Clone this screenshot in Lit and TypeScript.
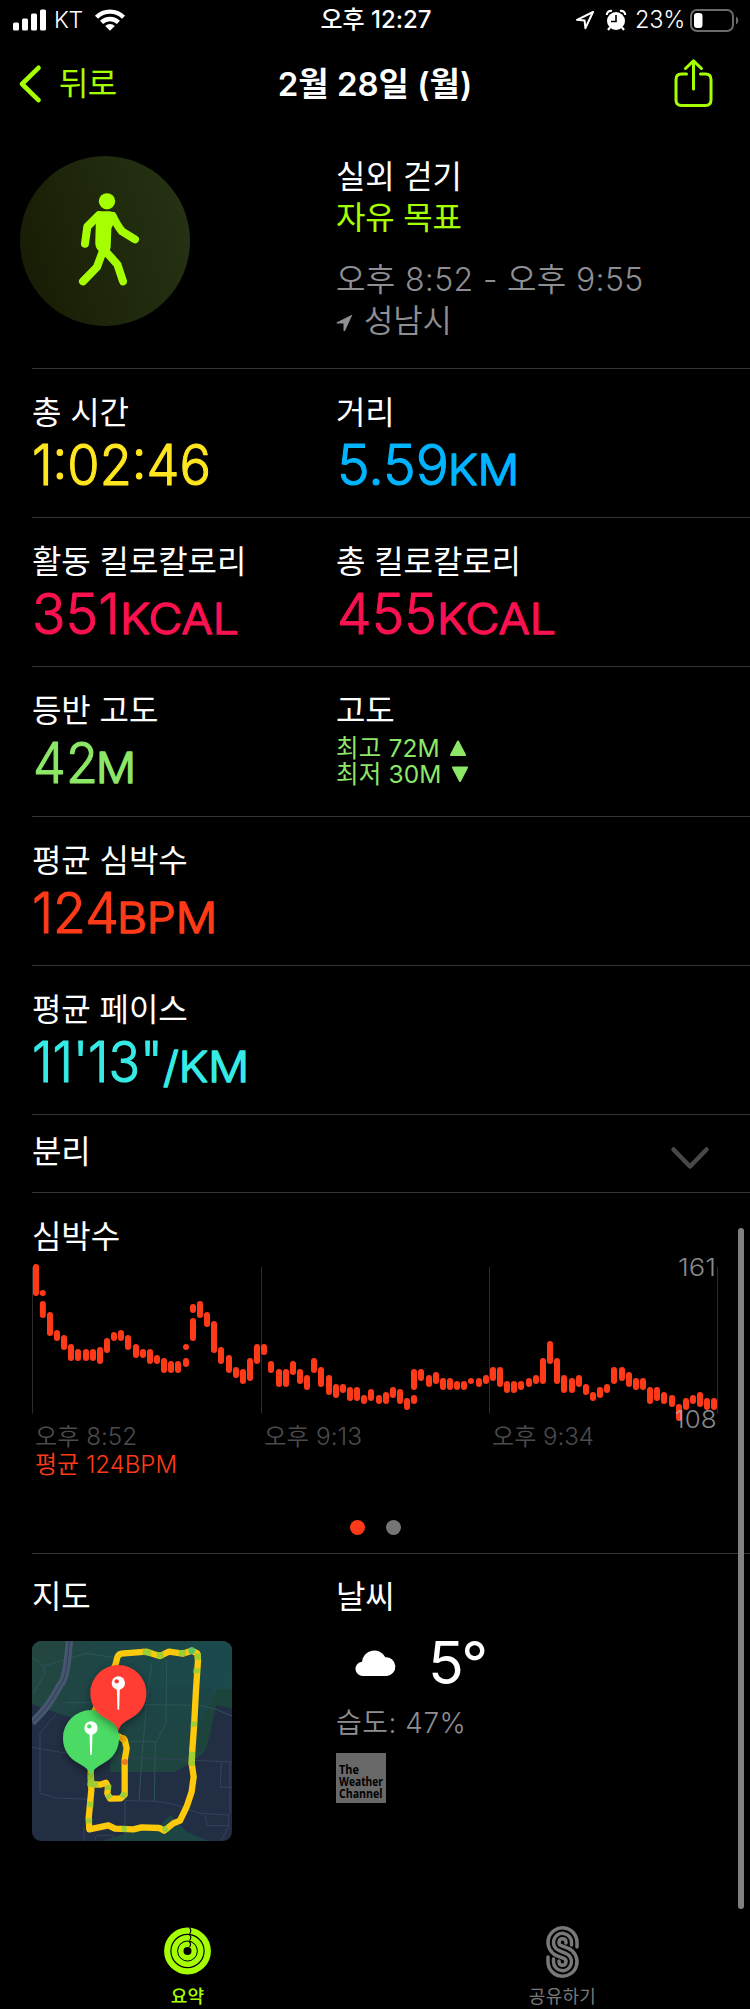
import { LitElement, html, svg, css, nothing } from "lit";
import { customElement, property } from "lit/decorators.js";

type Run = { t: string; x: number; w: number; unit?: boolean };
type Metric = { label: string; color: string; runs: Run[] };

const METRICS: Metric[][] = [
  [
    { label: "총 시간", color: "yellow", runs: [{ t: "1:02:46", x: 0, w: 179 }] },
    { label: "거리", color: "blue", runs: [{ t: "5.59", x: 1, w: 112 }, { t: "KM", x: 112, w: 71, unit: true }] },
  ],
  [
    { label: "활동 킬로칼로리", color: "pink", runs: [{ t: "351", x: 0, w: 88 }, { t: "KCAL", x: 88, w: 119, unit: true }] },
    { label: "총 킬로칼로리", color: "pink", runs: [{ t: "455", x: 1, w: 100 }, { t: "KCAL", x: 101, w: 119, unit: true }] },
  ],
  [
    { label: "등반 고도", color: "green", runs: [{ t: "42", x: 1, w: 65 }, { t: "M", x: 64, w: 40, unit: true }] },
  ],
  [
    { label: "평균 심박수", color: "red", runs: [{ t: "124", x: 0, w: 87 }, { t: "BPM", x: 85, w: 100, unit: true }] },
  ],
  [
    { label: "평균 페이스", color: "cyan", runs: [{ t: "11'13\"", x: 0, w: 131 }, { t: "/KM", x: 131, w: 86, unit: true }] },
  ],
];

// Heart-rate samples: [centre x, top, bottom] in thirds of a pixel.
const SAMPLES: number[][] = [
  [108,162,258],[128.5,240,258],[128.5,273,324],[150,306,378],[171,360,393],[192,375,420],[213,402,453],[234,417,453],
  [258,417,453],[279,417,453],[300,411,462],[321,384,429],[342,366,393],[363,360,393],[384,375,420],[408,402,444],
  [429,417,444],[450,417,462],[471,435,462],[492,444,489],[513,453,489],[534,453,489],[558,402,420],[558,444,471],
  [579,282,309],[579,324,393],[600,273,324],[621,306,351],[642,333,429],[663,411,462],[687,435,489],[708,471,504],
  [729,477,522],[750,444,513],[771,402,462],[792,402,435],[813,453,489],[837,477,531],[858,477,531],[879,453,495],
  [900,477,522],[921,495,540],[942,444,489],[963,471,531],[987,495,555],[1008,522,564],[1029,522,549],[1050,531,573],
  [1071,531,573],[1092,555,582],[1113,537,573],[1137,555,582],[1158,546,582],[1179,531,564],[1200,537,582],[1221,564,600],
  [1242,477,540],[1242,555,582],[1263,477,513],[1287,495,531],[1308,486,522],[1329,504,540],[1350,504,540],[1371,513,540],
  [1392,513,540],[1413,504,522],[1437,504,531],[1458,495,522],[1479,471,513],[1500,471,531],[1521,513,549],[1542,513,549],
  [1563,513,540],[1587,504,531],[1608,495,522],[1629,444,522],[1650,393,462],[1671,444,522],[1692,495,549],[1716,504,549],
  [1737,495,531],[1758,522,555],[1779,546,573],[1800,531,564],[1821,522,549],[1842,471,522],[1866,471,513],[1887,486,531],
  [1908,504,540],[1929,504,540],[1950,531,582],[1971,531,573],[1992,546,582],[2016,555,591],[2037,582,633],[2058,564,600],
  [2079,555,582],[2100,546,591],[2121,564,600],[2142,564,600],
];

const FONT = css`"Inter", "Noto Sans CJK KR", sans-serif`;

@customElement("metric-cell")
class MetricCell extends LitElement {
  @property({ attribute: false }) metric!: Metric;
  static styles = css`
    :host { display: block; }
    .label { font: 400 32px/40px ${FONT}; letter-spacing: -0.1px; color: #fff; white-space: pre; }
    svg { display: block; overflow: visible; }
    text { font-family: ${FONT}; font-weight: 300; fill: currentColor; stroke: currentColor; stroke-width: 1.1; stroke-linejoin: round; }
    .num { font-size: 56px; }
    .unit { font-size: 42.5px; stroke-width: 1.5; }
    .yellow { color: #ffe620; } .blue { color: #00b4ff; } .pink { color: #fa114f; }
    .green { color: #8de767; } .red { color: #ff3a18; } .cyan { color: #36ebe6; }
  `;
  render() {
    const m = this.metric;
    return html`
      <div class="label">${m.label}</div>
      <svg class=${m.color} width="240" height="62">
        ${m.runs.map((r) => svg`<text class=${r.unit ? "unit" : "num"} x=${r.x} y="52" textLength=${r.w} lengthAdjust="spacingAndGlyphs">${r.t}</text>`)}
      </svg>`;
  }
}

@customElement("heart-chart")
class HeartChart extends LitElement {
  static styles = css`
    :host { display: block; }
    svg { display: block; overflow: visible; }
    text { font-family: ${FONT}; font-size: 24px; }
    .grid { stroke: #2b2b2d; stroke-width: 1; }
    .bar { fill: #ff3a18; }
    .range { fill: #aeaeb4; fill-opacity: 0.8; font-weight: 350; }
    .time { fill: #4b4b4e; font-weight: 350; }
    .avg { fill: #ff3a18; font-weight: 350; }
  `;
  render() {
    return html`<svg width="718" height="220" viewBox="32 1260 718 220">
      ${[32.5, 261.5, 489.5, 717.5].map((x) => svg`<line class="grid" x1=${x} x2=${x} y1="1267" y2="1413.5"/>`)}
      ${SAMPLES.map(([x, a, b]) => svg`<rect class="bar" x=${x / 3 - 3} y=${1210 + a / 3} width="6" height=${(b - a) / 3} rx="3"/>`)}
      <text class="range" x="678" y="1275.5" textLength="38" lengthAdjust="spacingAndGlyphs">161</text>
      <text class="range" x="674.5" y="1427.5" textLength="42" lengthAdjust="spacingAndGlyphs">108</text>
      <text class="time" x="35" y="1445" textLength="102" lengthAdjust="spacingAndGlyphs">오후 8:52</text>
      <text class="time" x="264" y="1445" textLength="98" lengthAdjust="spacingAndGlyphs">오후 9:13</text>
      <text class="time" x="492" y="1445" textLength="102" lengthAdjust="spacingAndGlyphs">오후 9:34</text>
      <text class="avg" x="35" y="1473" textLength="142" lengthAdjust="spacingAndGlyphs">평균 124BPM</text>
    </svg>`;
  }
}

@customElement("route-map")
class RouteMap extends LitElement {
  static styles = css`
    :host { display: block; width: 200px; height: 200px; border-radius: 9px; overflow: hidden; }
    svg { display: block; }
    .road { fill: none; stroke: #35425a; stroke-width: 3; }
    .road-park { fill: none; stroke: #2d5558; stroke-width: 3; }
    .route { fill: none; stroke: #fdc90a; stroke-width: 19; stroke-linejoin: round; stroke-linecap: round; }
    .fast { fill: none; stroke: #9fce32; stroke-width: 18; stroke-linecap: butt; }
  `;
  pin(x: number, y: number, color: string) {
    return svg`<g transform="translate(${x} ${y})">
      <path filter="url(#shadow)" fill=${color} d="M0 114C-5 96-16 88-37 76C-65 61-84 36-84 0A84 84 0 0 1 84 0C84 36 65 61 37 76C16 88 5 96 0 114Z"/>
      <circle cy="-30" r="20" fill="#fff"/><circle cx="-5" cy="-35" r="6.5" fill=${color}/>
      <path d="M-4.5-12H4.5L2.5 50H-2.5Z" fill="#fff"/></g>`;
  }
  render() {
    return html`<svg width="200" height="200" viewBox="96 243 600 600">
      <defs>
        <filter id="shadow" x="-40%" y="-40%" width="180%" height="180%"><feDropShadow dx="0" dy="9" stdDeviation="13" flood-color="#000" flood-opacity=".4"/></filter>
        <linearGradient id="park" x1="0" y1="0" x2="1" y2=".2"><stop offset="0" stop-color="#24463f"/><stop offset=".45" stop-color="#1d4648"/><stop offset="1" stop-color="#1b4a4c"/></linearGradient>
        <linearGradient id="low" x1="0" y1="0" x2="0" y2="1"><stop offset="0" stop-color="#1c4549"/><stop offset="1" stop-color="#1f453f"/></linearGradient>
      </defs>
      <rect x="96" y="243" width="600" height="600" fill="#222e44"/>
      <path fill="url(#park)" d="M96 243H696V445L648 435L620 560L605 582L540 628L520 636H330L345 500L205 470L96 432Z"/>
      <path fill="url(#low)" d="M340 380H640L620 560L605 582L540 628L520 636H330Z"/>
      <path fill="#1c443b" d="M650 388H696V445L648 435L620 560L590 586L600 500Z"/>
      <path fill="#1d4543" d="M310 843L390 815L480 795L512 765L560 815L625 843Z"/>
      <path class="road" d="M96 562L200 580M120 700V520L190 435M120 700L170 714L270 718M330 590L696 606M664 606L661 682H696M320 714L390 722L470 724L530 735L600 760L690 765M615 765L622 797H686M686 765V800L665 840M690 606V760M375 722V843M285 838L290 826H340V838M252 800V843"/>
      <path class="road-park" d="M130 318L96 292M130 318L260 280L340 292M130 318L135 340L100 400M195 428H270L430 434L600 436L648 448L696 468M455 310L440 430L425 600L417 722M500 300L498 490L466 550L463 724M380 545H466"/>
      <path fill="none" stroke="#47566f" stroke-width="22" d="M208 243C202 320 196 360 180 375C155 420 145 440 96 488"/>
      <path fill="none" stroke="#2c3b55" stroke-width="3" d="M208 243C202 320 196 360 180 375C155 420 145 440 96 488"/>
      <path class="route" d="M280 460L310 400L347 312L352 292Q356 279 372 280L440 275L460 282L480 288L507 275L548 281L575 272L592 280L594 300L588 390L582 500L577 570L575 610L581 650L575 695L560 740L540 782L520 790L493 812L478 804L425 802L400 808L345 806L325 796L268 808L266 775L274 690L272 625M272 672L300 674L318 668L324 680L322 700L330 716L362 715L374 704L374 600L380 565L374 540L358 530"/>
      <path class="fast" d="M428 275L454 279M470 286L490 286M536 279L558 279M594 280L593 300M590 325L589 340M582 485L581 500M576 575L575 618M272 640L272 672L294 674M271 725L271 742M268 775L267 790M365 807H380M488 810L503 805M325 675L324 690M322 703L330 715M374 697L366 713"/>
      <circle cx="575" cy="272" r="10" fill="#55c66a"/><circle cx="375" cy="606" r="9" fill="#f07820"/><circle cx="370" cy="536" r="10" fill="#f5a70a"/>
      ${this.pin(273, 534, "#4cda64")}
      ${this.pin(355, 399, "#ff3c32")}
    </svg>`;
  }
}

function trackPath(r1: number, r2: number, d1: number, d2: number) {
  const cx = 97, y1 = 79, y2 = 137;
  const ny = (r1 + r2) / (y2 - y1);
  const nx = Math.sqrt(1 - ny * ny);
  return `M${cx + r1} ${y1 + d1}V${y1}A${r1} ${r1} 0 1 0 ${cx - r1 * nx} ${y1 + r1 * ny}L${cx + r2 * nx} ${y2 - r2 * ny}A${r2} ${r2} 0 1 1 ${cx - r2} ${y2}V${y2 - d2}`;
}

@customElement("app-root")
class AppRoot extends LitElement {
  static styles = css`
    :host { display: block; position: relative; width: 750px; height: 2009px; background: #000; color: #fff; font-family: ${FONT}; overflow: hidden; }
    * { box-sizing: border-box; }
    svg { display: block; flex: none; overflow: visible; }
    .status { height: 40px; display: grid; grid-template-columns: 1fr auto 1fr; align-items: center; padding: 0 11px 0 13px; font-size: 23px; line-height: 40px; }
    .left, .right { display: flex; align-items: center; }
    .right { justify-content: flex-end; }
    .carrier { margin-left: 8px; width: 41px; letter-spacing: -0.5px; font-weight: 350; }
    .clock { font-weight: 500; font-size: 24px; white-space: pre; letter-spacing: 0; }
    .pct { margin: 0 5px 0 9px; width: 50px; letter-spacing: -0.2px; font-size: 23.5px; font-weight: 350; white-space: nowrap; }
    .alarm { margin-left: 11px; }
    .nav { height: 90px; display: grid; grid-template-columns: 1fr auto 1fr; padding: 0 19px 0 19px; align-items: center; color: #a6ff00; }
    .back { display: flex; align-items: center; gap: 17px; font-size: 32px; line-height: 40px; padding-bottom: 2px; letter-spacing: -0.7px; }
    .title { color: #fff; font-weight: 600; font-size: 33px; line-height: 40px; letter-spacing: 0; white-space: pre; padding-bottom: 2px; }
    .share { justify-self: end; padding-bottom: 4px; margin-right: 18px; }
    .head { height: 238px; display: grid; grid-template-columns: 316px 1fr; padding: 26px 0 0 20px; }
    .info { font-size: 32px; line-height: 41px; letter-spacing: -0.2px; white-space: nowrap; }
    .goal { color: #a6ff00; }
    .grey { color: #8e8e93; font-weight: 350; }
    .when { margin-top: 21px; letter-spacing: 0.35px; }
    .place { display: flex; align-items: center; gap: 11px; }
    .place svg { margin-top: 5px; }
    .row { margin-left: 32px; border-top: 1px solid #343436; }
    .metrics { height: 149.2px; display: grid; grid-template-columns: 304px 1fr; padding-top: 24px; }
    .label { font: 400 32px/40px ${FONT}; letter-spacing: -0.1px; white-space: pre; }
    .elev { display: flex; flex-direction: column; font-size: 24.5px; line-height: 26px; color: #8de767; padding-top: 4px; }
    .elev div { display: flex; align-items: center; gap: 10px; white-space: pre; letter-spacing: 0.15px; }
    .splits { height: 78px; display: flex; justify-content: space-between; padding: 17px 41px 0 0; }
    .splits svg { margin-top: 15px; }
    .heart { height: 361px; padding-top: 24px; }
    .heart heart-chart { margin-top: 3px; }
    .dots { display: flex; justify-content: center; gap: 21px; margin: 40px 32px 0 0; }
    .dot { width: 15px; height: 15px; border-radius: 50%; background: #757575; }
    .dot.on { background: #ff3a18; }
    .bottom { display: grid; grid-template-columns: 304px 1fr; padding-top: 23px; height: 350px; }
    route-map { margin-top: 24px; }
    .temp { display: flex; align-items: center; height: 60px; padding: 0 0 0 20px; margin-top: 16px; }
    .deg { font-size: 59px; line-height: 60px; margin-left: 32px; font-weight: 400; letter-spacing: -2.5px; padding-top: 1px; }
    .humid { font-size: 28px; line-height: 36px; margin-top: 12px; color: #8e8e93; font-weight: 350; white-space: pre; letter-spacing: 0.5px; }
    .twc { width: 50px; height: 50px; margin-top: 12px; background: #686868; }
    .twc text { font-family: "Open Sans", sans-serif; font-weight: 700; font-size: 13px; fill: #000; }
    .tabs { display: grid; grid-template-columns: 1fr 1fr; height: 106px; padding-top: 23px; }
    .tab { display: flex; flex-direction: column; align-items: center; font-size: 18px; line-height: 24px; color: #78787a; letter-spacing: 0.3px; }
    .tab.on { color: #a6ff00; font-weight: 500; }
    .tab svg { margin-bottom: 7px; }
    .scroll { position: absolute; left: 738px; top: 1228px; width: 6px; height: 681px; border-radius: 3px; background: #808080; }
  `;

  header() {
    return html`
      <div class="status">
        <div class="left">
          <svg width="33" height="22" viewBox="0 0 33 22" fill="#fff"><rect y="13.5" width="6" height="8" rx="1.5"/><rect x="9" y="9.5" width="6" height="12" rx="1.5"/><rect x="18" y="4.5" width="6" height="17" rx="1.5"/><rect x="27" y=".5" width="6" height="21" rx="1.5"/></svg>
          <span class="carrier">KT</span>
          <svg width="30" height="22" viewBox="0 0 30 22" fill="none" stroke="#fff" stroke-width="4.4"><path d="M1.5 8.3A19 19 0 0 1 28.5 8.3"/><path d="M6.6 13.4A12 12 0 0 1 23.4 13.4"/><path fill="#fff" stroke="none" d="M15 21.8L10.2 17A6.8 6.8 0 0 1 19.8 17Z"/></svg>
        </div>
        <div class="clock">오후 12:27</div>
        <div class="right">
          <svg width="20" height="20" viewBox="0 0 20 20" fill="none" stroke="#fff" stroke-width="2" stroke-linejoin="round"><path d="M18 2L2 9.8L9.6 10.6L10.4 18.2Z"/></svg>
          <svg class="alarm" width="20" height="21" viewBox="0 0 20 21"><circle cx="10" cy="11" r="9" fill="#fff"/><path d="M.8 5A4 4 0 0 1 6 1M19.2 5A4 4 0 0 0 14 1M4 17.5L2 20M16 17.5L18 20" stroke="#fff" stroke-width="2.2" fill="none"/><path d="M10 5V11.5H5" stroke="#000" stroke-width="1.6" fill="none"/></svg>
          <span class="pct">23%</span>
          <svg width="49" height="23" viewBox="0 0 49 23"><rect x="1" y="1" width="42" height="21" rx="6" fill="none" stroke="#6b6b6b" stroke-width="2"/><rect x="4" y="4" width="8.5" height="15" rx="3" fill="#fff"/><path d="M46 7.5C49 9 49 14 46 15.5Z" fill="#6b6b6b"/></svg>
        </div>
      </div>
      <div class="nav">
        <div class="back">
          <svg width="23" height="38" viewBox="0 0 23 38" fill="none" stroke="#a6ff00" stroke-width="4.6" stroke-linecap="round" stroke-linejoin="round"><path d="M19.5 2.8L3 19L19.5 35.2"/></svg>
          <span>뒤로</span>
        </div>
        <div class="title">2월 28일 (월)</div>
        <svg class="share" width="39" height="52" viewBox="0 0 39 48" fill="none" stroke="#a6ff00" stroke-width="3" stroke-linecap="round" stroke-linejoin="round"><path d="M12.5 15H7.5Q2 15 2 20.500V41Q2 46.500 7.500 46.500H31.500Q37 46.500 37 41V20.500Q37 15 31.500 15H26.500M19.500 30V2M11.500 9.500L19.500 1.800L27.500 9.500"/></svg>
      </div>
      <div class="head">
        <svg width="170" height="170" viewBox="30 17 510 510">
          <defs><linearGradient id="disc" x1="0" y1=".65" x2="1" y2=".35"><stop offset="0" stop-color="#171d04"/><stop offset="1" stop-color="#263213"/></linearGradient></defs>
          <circle cx="285" cy="272" r="255" fill="url(#disc)"/>
          <g fill="none" stroke="#a6ff00" stroke-width="24" stroke-linecap="round" stroke-linejoin="round"><path d="M266 195L232 229L225 280M308 197Q322 226 336 243L375 267M281 296L261 350L219 393M287 303L322 342L339 393"/></g>
          <path fill="#a6ff00" d="M266 183H300Q315 186 320 199L304 235L302 290Q300 309 284 309Q268 309 260 294Q255 286 256 268L258 200Z"/>
          <circle cx="291" cy="153" r="24.500" fill="#a6ff00"/>
        </svg>
        <div class="info">
          <div>실외 걷기</div>
          <div class="goal">자유 목표</div>
          <div class="grey when">오후 8:52 - 오후 9:55</div>
          <div class="grey place"><svg width="17" height="18" viewBox="0 0 17 18" fill="#8e8e93"><path d="M16.500 .5L.5 8.500Q.2 9.500 1.500 9.500H7.500V16.500Q8.200 18 9.200 16.500Z"/></svg>성남시</div>
        </div>
      </div>`;
  }

  render() {
    return html`
      ${this.header()}
      ${METRICS.map((row, i) => html`<div class="row metrics">
        ${row.map((m) => html`<metric-cell .metric=${m}></metric-cell>`)}
        ${i === 2 ? html`<div>
          <div class="label">고도</div>
          <div class="elev">
            <div>최고 72M<svg width="16" height="16" viewBox="0 0 16 16" fill="#8de767"><path stroke="#8de767" stroke-width="2" stroke-linejoin="round" d="M8 1.500L15 15H1Z"/></svg></div>
            <div>최저 30M<svg width="16" height="16" viewBox="0 0 16 16" fill="#8de767"><path stroke="#8de767" stroke-width="2" stroke-linejoin="round" d="M8 15L15 1.500H1Z"/></svg></div>
          </div>
        </div>` : nothing}
      </div>`)}
      <div class="row splits">
        <div class="label">분리</div>
        <svg width="38" height="23" viewBox="0 0 38 23" fill="none" stroke="#48484a" stroke-width="4.500" stroke-linecap="round" stroke-linejoin="round"><path d="M2.500 2.500L19 19.500L35.500 2.500"/></svg>
      </div>
      <div class="row heart">
        <div class="label">심박수</div>
        <heart-chart></heart-chart>
        <div class="dots"><div class="dot on"></div><div class="dot"></div></div>
      </div>
      <div class="row bottom">
        <div><div class="label">지도</div><route-map></route-map></div>
        <div>
          <div class="label">날씨</div>
          <div class="temp">
            <svg width="40" height="26" viewBox="0 0 120 78" fill="#fff"><path d="M22 78A21.500 21.500 0 0 1 18 35A37 37 0 0 1 88 22A28 28 0 0 1 92 78Z"/></svg>
            <span class="deg">5°</span>
          </div>
          <div class="humid">습도: 47%</div>
          <svg class="twc" width="50" height="50"><text x="3" y="21" textLength="20" lengthAdjust="spacingAndGlyphs">The</text><text x="3" y="33" textLength="44" lengthAdjust="spacingAndGlyphs">Weather</text><text x="3" y="45" textLength="43.500" lengthAdjust="spacingAndGlyphs">Channel</text></svg>
        </div>
      </div>
      <div class="tabs">
        <div class="tab on">
          <svg width="47" height="52" viewBox="-23.500 -25 47 52" fill="none" stroke="#a6ff00"><circle r="20.300" stroke-width="6.200"/><circle r="13.200" stroke-width="5.600"/><circle r="6.700" stroke-width="5.400"/><path stroke="#000" stroke-width="1.200" d="M2-23.500Q4.600-20.300 2-17M2-16.500Q4.600-13.500 2-10.500M1.500-9.500Q4.300-7 2-4"/></svg>
          <span>요약</span>
        </div>
        <div class="tab">
          <svg width="33" height="52" viewBox="48 30 98 156" fill="none" stroke="#78787a" stroke-width="10.500" stroke-linecap="round">
            <path d=${trackPath(43.5, 10.5, 14, 2)}/><path d=${trackPath(27, 27, 8, 8)}/><path d=${trackPath(10.5, 43.5, 2, 14)}/>
          </svg>
          <span>공유하기</span>
        </div>
      </div>
      <div class="scroll"></div>`;
  }
}
